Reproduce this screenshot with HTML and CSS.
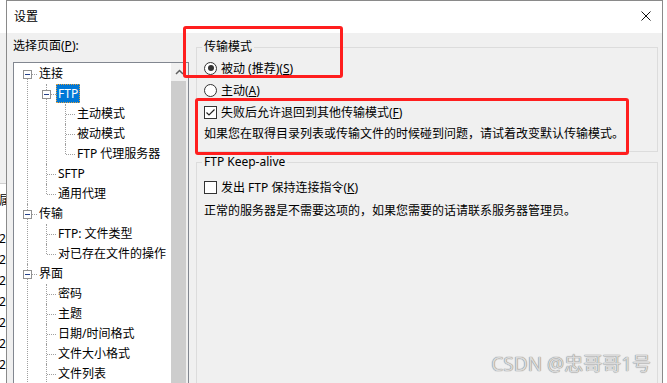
FILE: index.html
```html
<!DOCTYPE html>
<html lang="zh-CN">
<head>
    <meta charset="UTF-8">
    <meta name="viewport" content="width=device-width, initial-scale=1.0">
    <title>设置</title>
    <link rel="stylesheet" href="styles.css">
</head>
<body>
    <div class="behind">
        <div class="behind-bar"></div>
        <div class="behind-list">
            <div class="behind-head">属性</div>
            <div class="behind-rows">
                <div>2023</div>
                <div>2023</div>
                <div>2023</div>
                <div>2023</div>
                <div>2023</div>
                <div>2023</div>
                <div>2023</div>
            </div>
        </div>
    </div>

    <div class="dialog">
        <div class="titlebar">
            <span class="title">设置</span>
            <svg class="close" width="10" height="10" viewBox="0 0 10 10">
                <path d="M0.5 0.5L9.5 9.5M9.5 0.5L0.5 9.5" stroke="#111" stroke-width="1" fill="none"/>
            </svg>
        </div>
        <div class="content">
            <div class="nav">
                <div class="nav-label">选择页面(<u>P</u>):</div>
                <div class="tree-box">
                    <ul class="tree">
                        <li class="first">
                            <div class="row"><span class="exp"></span>连接</div>
                            <ul>
                                <li>
                                    <div class="row"><span class="exp"></span><span class="sel">FTP</span></div>
                                    <ul>
                                        <li><div class="row">主动模式</div></li>
                                        <li><div class="row">被动模式</div></li>
                                        <li class="last"><div class="row">FTP 代理服务器</div></li>
                                    </ul>
                                </li>
                                <li><div class="row">SFTP</div></li>
                                <li class="last"><div class="row">通用代理</div></li>
                            </ul>
                        </li>
                        <li>
                            <div class="row"><span class="exp"></span>传输</div>
                            <ul>
                                <li><div class="row">FTP: 文件类型</div></li>
                                <li class="last"><div class="row">对已存在文件的操作</div></li>
                            </ul>
                        </li>
                        <li>
                            <div class="row"><span class="exp"></span>界面</div>
                            <ul>
                                <li><div class="row">密码</div></li>
                                <li><div class="row">主题</div></li>
                                <li><div class="row">日期/时间格式</div></li>
                                <li><div class="row">文件大小格式</div></li>
                                <li><div class="row">文件列表</div></li>
                            </ul>
                        </li>
                    </ul>
                    <div class="scrollbar">
                        <div class="scroll-up">
                            <svg width="9" height="6" viewBox="0 0 9 6">
                                <path d="M1 5L4.5 1.5L8 5" fill="none" stroke="#606060" stroke-width="1.5"/>
                            </svg>
                        </div>
                        <div class="scroll-thumb"></div>
                    </div>
                </div>
            </div>

            <div class="panel">
                <fieldset class="group">
                    <legend>传输模式</legend>
                    <div class="opt"><span class="radio checked"></span>被动 (推荐)(<u>S</u>)</div>
                    <div class="opt"><span class="radio"></span>主动(<u>A</u>)</div>
                    <div class="opt">
                        <span class="check">
                            <svg width="11" height="11" viewBox="0 0 11 11">
                                <path d="M1.5 5.5L4 8L9.5 2.5" fill="none" stroke="#222" stroke-width="1.2"/>
                            </svg>
                        </span>失败后允许退回到其他传输模式(<u>F</u>)
                    </div>
                    <div class="note">如果您在取得目录列表或传输文件的时候碰到问题，请试着改变默认传输模式。</div>
                </fieldset>
                <fieldset class="group keepalive">
                    <legend>FTP Keep-alive</legend>
                    <div class="opt"><span class="check"></span>发出 FTP 保持连接指令(<u>K</u>)</div>
                    <div class="note">正常的服务器是不需要这项的，如果您需要的话请联系服务器管理员。</div>
                </fieldset>
            </div>
        </div>
    </div>
    <div class="behind-right"></div>

    <div class="mark mark-mode"></div>
    <div class="mark mark-fallback"></div>
    <div class="watermark">CSDN @忠哥哥1号</div>
</body>
</html>
```

FILE: styles.css
```css
body {
    margin: 0;
    width: 667px;
    height: 383px;
    overflow: hidden;
    display: flex;
    position: relative;
    background: #fff;
    color: #000;
    font-family: "Noto Sans", "Noto Sans CJK SC", sans-serif;
    font-size: 12px;
}
u {
    text-underline-offset: 1px;
}

/* window behind the dialog */
.behind {
    width: 6px;
    flex: none;
    overflow: hidden;
    display: flex;
    flex-direction: column;
    white-space: nowrap;
}
.behind-bar {
    height: 150px;
    margin-top: 33px;
    background: #f0f0f0;
}
.behind-list {
    flex: 1;
    min-height: 0;
    overflow: hidden;
    border-top: 1px solid #d0d0d0;
    padding-top: 6px;
}
.behind-head,
.behind-rows div {
    margin-left: -1px;
    height: 21px;
    line-height: 21px;
}
.behind-rows {
    margin-top: 17px;
}
.behind-right {
    flex: 1;
    background: #fff;
}

/* dialog */
.dialog {
    width: 657px;
    flex: none;
    box-sizing: border-box;
    border: 1px solid #8a8a8a;
    border-bottom: none;
    display: flex;
    flex-direction: column;
    background: #f0f0f0;
}
.titlebar {
    height: 32px;
    flex: none;
    box-sizing: border-box;
    padding: 0 11px 2px 7px;
    background: #fff;
    display: flex;
    align-items: center;
    justify-content: space-between;
}
.content {
    flex: 1;
    min-height: 0;
    display: flex;
    padding-left: 6px;
}

/* page tree */
.nav {
    width: 176px;
    flex: none;
    display: flex;
    flex-direction: column;
}
.nav-label {
    height: 20px;
    line-height: 20px;
    margin-top: 3px;
}
.tree-box {
    flex: 1;
    min-height: 0;
    margin-top: 6px;
    border: 1px solid #828790;
    border-bottom: none;
    background: #fff;
    display: flex;
}
.tree {
    flex: 1;
    margin: 0;
    padding: 1px 0 0;
    list-style: none;
    overflow: hidden;
}
.tree ul {
    list-style: none;
    margin: 0;
    padding: 0 0 0 19px;
}
.tree li {
    position: relative;
}
.tree li::before {
    content: "";
    position: absolute;
    left: 13px;
    top: 0;
    bottom: 0;
    border-left: 1px dotted #a0a0a0;
}
.tree li.first::before {
    top: 10px;
}
.tree li.last::before {
    bottom: auto;
    height: 10px;
}
.row {
    position: relative;
    height: 20px;
    line-height: 20px;
    padding-left: 25px;
    white-space: nowrap;
}
.row::before {
    content: "";
    position: absolute;
    left: 14px;
    top: 10px;
    width: 9px;
    border-top: 1px dotted #a0a0a0;
}
.exp {
    position: absolute;
    left: 9px;
    top: 6px;
    width: 7px;
    height: 7px;
    border: 1px solid #919191;
    background: #fff;
    z-index: 1;
}
.exp::after {
    content: "";
    position: absolute;
    left: 1px;
    top: 3px;
    width: 5px;
    height: 1px;
    background: #24408a;
}
.sel {
    display: inline-block;
    vertical-align: top;
    height: 19px;
    line-height: 19px;
    padding: 0 2px;
    margin-left: -2px;
    background: #0078d7;
    color: #fff;
    outline: 1px dotted #e0a040;
    outline-offset: -1px;
}
.scrollbar {
    width: 17px;
    flex: none;
    background: #f0f0f0;
    display: flex;
    flex-direction: column;
}
.scroll-up {
    height: 17px;
    display: flex;
    align-items: center;
    justify-content: center;
}
.scroll-thumb {
    flex: 1;
    margin: 1px 2px 0 0;
    background: #cdcdcd;
}

/* settings panel */
.panel {
    width: 462px;
    flex: none;
    margin-left: 7px;
    padding-top: 6px;
    display: flex;
    flex-direction: column;
}
.group {
    margin: 0;
    padding: 2px 7px 6px;
    border: 1px solid #dcdcdc;
    min-width: 0;
    flex: none;
}
.group legend {
    margin-left: -2px;
    padding: 0 2px;
    line-height: 16px;
}
.keepalive {
    margin-top: 2px;
    padding-top: 6px;
    flex: 1;
    min-height: 0;
    border-bottom: none;
}
.opt {
    height: 22px;
    display: flex;
    align-items: center;
    white-space: nowrap;
}
.keepalive .note {
    margin-top: 2px;
}
.note {
    height: 22px;
    line-height: 22px;
    white-space: nowrap;
}
.radio {
    width: 11px;
    height: 11px;
    border: 1px solid #333;
    border-radius: 50%;
    background: #fff;
    margin-right: 4px;
    display: flex;
    align-items: center;
    justify-content: center;
}
.radio.checked::after {
    content: "";
    width: 6px;
    height: 6px;
    border-radius: 50%;
    background: #333;
}
.check {
    width: 11px;
    height: 11px;
    border: 1px solid #333;
    background: #fff;
    margin-right: 4px;
    display: flex;
}

/* red annotation frames drawn over the screenshot */
.mark {
    position: absolute;
    box-sizing: border-box;
    border: 3px solid #ff1e1e;
    border-radius: 3px;
}
.mark-mode {
    left: 183px;
    top: 26px;
    width: 160px;
    height: 52px;
}
.mark-fallback {
    left: 195px;
    top: 98px;
    width: 434px;
    height: 57px;
}
.watermark {
    position: absolute;
    right: 16px;
    top: 352px;
    line-height: 24px;
    font-size: 19px;
    color: #dadada;
    text-shadow: 0 0 1px #888, 0 0 1px #888;
    white-space: nowrap;
}
```
